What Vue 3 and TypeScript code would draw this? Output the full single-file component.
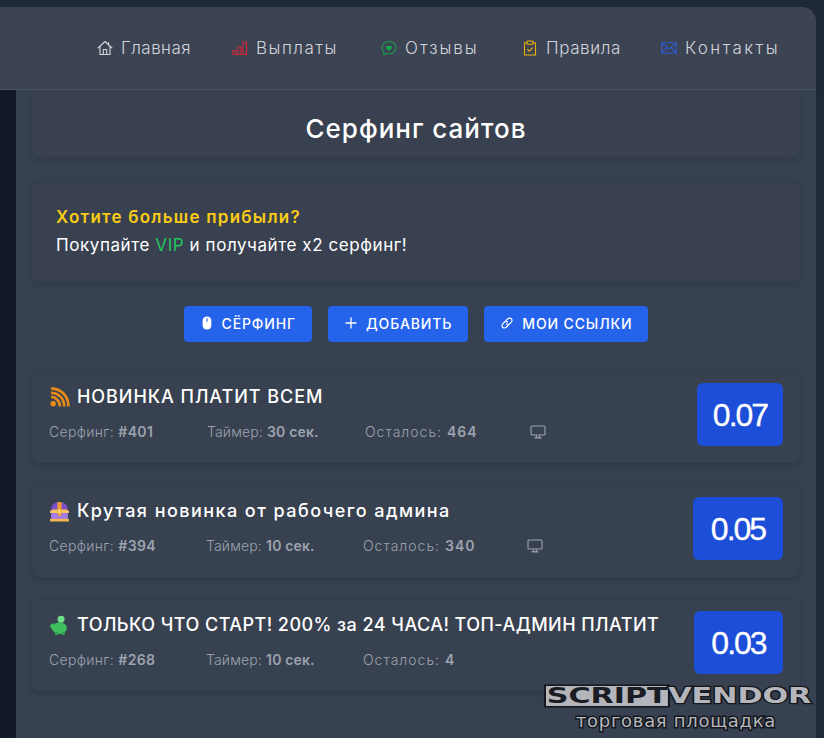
<script setup lang="ts">
interface NavItem {
  label: string
  icon: string
  spacing: number
}

interface Offer {
  id: number
  title: string
  icon: string
  timer: number
  left: number
  price: string
  priceWidth: number
  spacing: number
  tight?: boolean
  screen?: boolean
}

const nav: NavItem[] = [
  { label: 'Главная', icon: 'home', spacing: 0.45 },
  { label: 'Выплаты', icon: 'bars', spacing: 1.5 },
  { label: 'Отзывы', icon: 'chat', spacing: 2 },
  { label: 'Правила', icon: 'clip', spacing: 0.6 },
  { label: 'Контакты', icon: 'mail', spacing: 2.4 }
]

const offers: Offer[] = [
  { id: 401, title: 'НОВИНКА ПЛАТИТ ВСЕМ', icon: 'rss', timer: 30, left: 464, price: '0.07', priceWidth: 86, spacing: 0.95, screen: true },
  { id: 394, title: 'Крутая новинка от рабочего админа', icon: 'chest', timer: 10, left: 340, price: '0.05', priceWidth: 90, spacing: 1.45, tight: true, screen: true },
  { id: 268, title: 'ТОЛЬКО ЧТО СТАРТ! 200% за 24 ЧАСА! ТОП-АДМИН ПЛАТИТ', icon: 'pig', timer: 10, left: 4, price: '0.03', priceWidth: 89, spacing: 0.45, tight: true }
]
</script>

<template>
  <div class="page">
    <header class="topbar">
      <nav class="nav">
        <a v-for="item in nav" :key="item.label" class="nav-link">
          <svg class="nav-icon" viewBox="0 0 16 16" fill="none" stroke-width="1.1" stroke-linejoin="round" stroke-linecap="round">
            <g v-if="item.icon === 'home'" stroke="#d1d5db">
              <path d="M1 8 8 1.5 15 8" />
              <path d="M3 6.5V14.5H13V6.5" />
              <path d="M6.3 14.5V9.5H9.7V14.5" />
              <path d="M11.5 2.5V5" />
            </g>
            <g v-else-if="item.icon === 'bars'" stroke="#dc2638">
              <rect x="1" y="10.5" width="3" height="4" />
              <rect x="6" y="7" width="3" height="7.5" />
              <rect x="11" y="2" width="3.5" height="12.5" />
            </g>
            <g v-else-if="item.icon === 'chat'" stroke="#16a34a">
              <path d="M8 1.5C4 1.500 1 4.200 1 7.700 1 9.500 1.800 11 3 12L2.500 14.800 5.500 13.400C6.300 13.700 7.100 13.800 8 13.800 12 13.800 15 11.200 15 7.700 15 4.200 12 1.500 8 1.500Z" />
              <path d="M8 10.300 5.700 8C4.900 6.800 6.700 5.500 8 7 9.300 5.500 11.100 6.800 10.300 8Z" fill="#16a34a" />
            </g>
            <g v-else-if="item.icon === 'clip'" stroke="#eab308">
              <path d="M5 2.800H2.500V15H13.500V2.800H11" />
              <rect x="5" y="1" width="6" height="3.200" rx="0.8" />
              <path d="M5.500 9.500 7.300 11.200 10.500 7.800" />
            </g>
            <g v-else stroke="#2f5bd3">
              <rect x="0.700" y="2.700" width="14.600" height="10.600" rx="1" />
              <path d="M0.900 3.300 8 8.800 15.100 3.300" />
              <path d="M1 12.800 6 7.500M15 12.800 10 7.500" />
            </g>
          </svg>
          <span :style="{ letterSpacing: item.spacing + 'px' }">{{ item.label }}</span>
        </a>
      </nav>
    </header>

    <main class="panel">
      <section class="card title-card">
        <h1>Серфинг сайтов</h1>
      </section>

      <section class="card promo">
        <p class="promo-head">Хотите больше прибыли?</p>
        <p class="promo-text">Покупайте <span class="vip">VIP</span> и получайте x2 серфинг!</p>
      </section>

      <div class="actions">
        <button class="btn">
          <svg class="btn-icon" viewBox="0 0 12 16">
            <path d="M6 0.500C2.800 0.500 1 2.500 1 5.500V10.500C1 13.500 2.800 15.500 6 15.500 9.200 15.500 11 13.500 11 10.500V5.500C11 2.500 9.200 0.500 6 0.500Z" fill="#fff" />
            <path d="M6 2.500V6.500" stroke="#2563eb" stroke-width="1.200" />
          </svg>
          СЁРФИНГ
        </button>
        <button class="btn">
          <svg class="btn-icon" viewBox="0 0 12 12">
            <path d="M6 0.500V11.500M0.500 6H11.500" stroke="#fff" stroke-width="1.300" />
          </svg>
          ДОБАВИТЬ
        </button>
        <button class="btn">
          <svg class="btn-icon" viewBox="0 0 12 12" fill="none" stroke="#fff" stroke-width="1.200" stroke-linecap="round">
            <path d="M5 3.500 6.800 1.700C7.800 0.800 9.500 0.800 10.300 1.700 11.200 2.500 11.200 4.200 10.300 5.200L8.500 7C7.600 7.800 6.200 7.800 5.500 6.800" />
            <path d="M7 8.500 5.200 10.300C4.200 11.200 2.500 11.200 1.700 10.300 0.800 9.500 0.800 7.800 1.700 6.800L3.500 5C4.400 4.200 5.800 4.200 6.500 5.200" />
          </svg>
          МОИ ССЫЛКИ
        </button>
      </div>

      <div class="offers">
        <article v-for="offer in offers" :key="offer.id" class="card offer">
          <div class="offer-body">
            <h2 class="offer-title" :style="{ letterSpacing: offer.spacing + 'px' }">
              <svg v-if="offer.icon === 'rss'" class="emoji" viewBox="0 0 20 20" fill="none" stroke="#e88a1a" stroke-width="2.600">
                <circle cx="4" cy="16" r="2.600" fill="#e88a1a" stroke="none" />
                <path d="M2 9.500C6.500 9.500 10.500 13.500 10.500 18.500" />
                <path d="M2 5.500C9 5.500 14.500 11 14.500 18.500" />
                <path d="M2 1.500C11.500 1.500 18.500 8.500 18.500 18.500" />
              </svg>
              <svg v-else-if="offer.icon === 'chest'" class="emoji" viewBox="0 0 20 20">
                <path d="M2 9C2 4 5 1 10 1 15 1 18 4 18 9Z" fill="#7c4fc9" />
                <path d="M3 8H17V10H3Z" fill="#f2b84b" />
                <rect x="1" y="9" width="18" height="2.500" fill="#f6c667" />
                <rect x="2" y="11.500" width="16" height="6" fill="#a77be6" />
                <rect x="1" y="17" width="18" height="2.500" fill="#f2b84b" />
                <path d="M8 1H12V12H8Z" fill="#f09a2c" />
                <path d="M7.500 11.500H12.500L10 15.500Z" fill="#f09a2c" />
                <rect x="9" y="8" width="2" height="4" fill="#fde68a" />
              </svg>
              <svg v-else class="emoji" viewBox="0 0 20 20">
                <ellipse cx="10" cy="12.500" rx="7" ry="5.500" fill="#3fbf5f" />
                <circle cx="11.500" cy="4" r="3.300" fill="#6fe08a" />
                <path d="M1 9.500 4.500 7.500 5 13 2 13Z" fill="#3fbf5f" />
                <rect x="5.500" y="16" width="3" height="3" fill="#2fa34e" />
                <rect x="12" y="16" width="3" height="3" fill="#2fa34e" />
              </svg>
              {{ offer.title }}
            </h2>
            <div class="meta" :class="{ tight: offer.tight }">
              <span>Серфинг: <b>#{{ offer.id }}</b></span>
              <span class="meta-timer">Таймер: <b>{{ offer.timer }} сек.</b></span>
              <span class="meta-left">Осталось: <b>{{ offer.left }}</b></span>
              <svg v-if="offer.screen" class="screen" viewBox="0 0 16 14" fill="none" stroke="#9ca3af" stroke-width="1.100">
                <rect x="1" y="1" width="14" height="9" rx="1" />
                <path d="M4.500 12.800H11.500" stroke-width="1.400" />
                <path d="M6.500 10.500V12.500M9.500 10.500V12.500" />
              </svg>
            </div>
          </div>
          <div class="price" :style="{ width: offer.priceWidth + 'px' }">{{ offer.price }}</div>
        </article>
      </div>
    </main>

    <div class="stamp">
      <div class="stamp-name"><span class="stamp-script">SCRIPT</span><span class="stamp-vendor">VENDOR</span></div>
      <div class="stamp-sub">торговая площадка</div>
    </div>
  </div>
</template>

<style>
html,
body {
  margin: 0;
  background: #111827;
}
</style>

<style scoped>
.page {
  position: relative;
  width: 824px;
  height: 738px;
  overflow: hidden;
  padding-top: 7px;
  box-sizing: border-box;
  background:
    linear-gradient(#1f2838, #1f2838) no-repeat top / 100% 90px,
    linear-gradient(90deg, #111827 0%, #1f2937 100%);
  font-family: "Inter", "Noto Sans", sans-serif;
  color: #fff;
}

.topbar {
  width: 816px;
  height: 83px;
  box-sizing: border-box;
  border-top-right-radius: 14px;
  border-bottom: 1px solid #4b5563;
  background: #3c4353;
  display: flex;
  justify-content: flex-end;
  align-items: center;
  padding: 0 37px 0 0;
}

.nav {
  display: grid;
  grid-template-columns: 135px 149px 141px 139px 118px;
}

.nav-link {
  display: flex;
  align-items: center;
  gap: 8px;
  font-size: 17px;
  font-weight: 300;
  color: #d1d5db;
  white-space: nowrap;
}

.nav-icon {
  width: 16px;
  height: 16px;
  flex: none;
}

.panel {
  margin-left: 16px;
  width: 800px;
  height: 648px;
  box-sizing: border-box;
  padding: 0 16px;
  background: #374151;
}

.card {
  border-radius: 8px;
  background: #394150;
  box-shadow: 0 2px 6px rgba(17, 24, 39, 0.22);
}

.title-card {
  height: 67px;
  display: flex;
  align-items: center;
  justify-content: center;
  padding-top: 10px;
  box-sizing: border-box;
}

.title-card h1 {
  margin: 0;
  font-size: 26px;
  font-weight: 500;
  letter-spacing: 1px;
}

.promo {
  margin-top: 26px;
  height: 99px;
  box-sizing: border-box;
  padding: 20px 24px 0;
  font-size: 17px;
  font-weight: 400;
  letter-spacing: 0.58px;
}

.promo p {
  margin: 0;
  line-height: 28px;
}

.promo-head {
  color: #facc15;
  font-weight: 600;
  letter-spacing: 1.25px;
}

.vip {
  color: #22c55e;
}

.actions {
  margin-top: 24px;
  display: flex;
  justify-content: center;
  gap: 16px;
}

.btn {
  height: 36px;
  padding: 0 16px 2px 17px;
  border: 0;
  border-radius: 4px;
  display: flex;
  align-items: center;
  gap: 9px;
  background: #2563eb;
  color: #fff;
  font: 500 14px "Inter", "Noto Sans", sans-serif;
  letter-spacing: 0.85px;
}

.btn-icon {
  width: 12px;
  height: 14px;
}

.offers {
  margin-top: 30px;
  display: flex;
  flex-direction: column;
  gap: 23px;
}

.offer {
  height: 91px;
  box-sizing: border-box;
  padding: 11px 17px 0;
  display: flex;
  justify-content: space-between;
  background: #38414f;
}

.offer-title {
  margin: 1px 0 0;
  font-size: 18px;
  line-height: 26px;
  font-weight: 500;
  display: flex;
  align-items: center;
  gap: 7px;
  white-space: nowrap;
}

.emoji {
  width: 21px;
  height: 21px;
  flex: none;
}

.meta {
  margin-top: 13px;
  display: grid;
  grid-template-columns: 158px 158px 165px auto;
  font-size: 14px;
  font-weight: 300;
  letter-spacing: 0.35px;
  color: #9ca3af;
  align-items: center;
}

.meta.tight {
  grid-template-columns: 157px 157px 164px auto;
}

.meta-timer {
  letter-spacing: 0.15px;
}

.meta-left {
  letter-spacing: 1px;
}

.meta b {
  font-weight: 600;
}

.screen {
  width: 16px;
  height: 14px;
}

.price {
  flex: none;
  height: 63px;
  padding-top: 2px;
  box-sizing: border-box;
  border-radius: 6px;
  display: flex;
  align-items: center;
  justify-content: center;
  background: #1d4ed8;
  font: 32px "Liberation Sans", sans-serif;
  letter-spacing: -2px;
  -webkit-text-stroke: 0.3px #fff;
}

.stamp {
  position: absolute;
  left: 546px;
  top: 686px;
  width: 267px;
  pointer-events: none;
}

.stamp-name {
  display: flex;
  height: 26px;
  width: 195px;
  font: 700 22px/20px "DejaVu Sans", sans-serif;
  white-space: nowrap;
  transform: scaleX(1.37);
  transform-origin: left center;
}

.stamp-script {
  height: 20px;
  padding: 0 0.5px;
  background: #b4b6bb;
  color: #1a1d24;
  box-shadow: 0 0 0 1.500px #14171d;
}

.stamp-vendor {
  height: 20px;
  margin-left: 0;
  color: #b4b6bb;
  -webkit-text-stroke: 2.500px #14171d;
  paint-order: stroke fill;
}

.stamp-sub {
  width: 260px;
  text-align: center;
  font: 18px/18px "DejaVu Sans", sans-serif;
  letter-spacing: 0.7px;
  color: #b4b6bb;
  -webkit-text-stroke: 3px #14171d;
  paint-order: stroke fill;
  white-space: nowrap;
}
</style>
